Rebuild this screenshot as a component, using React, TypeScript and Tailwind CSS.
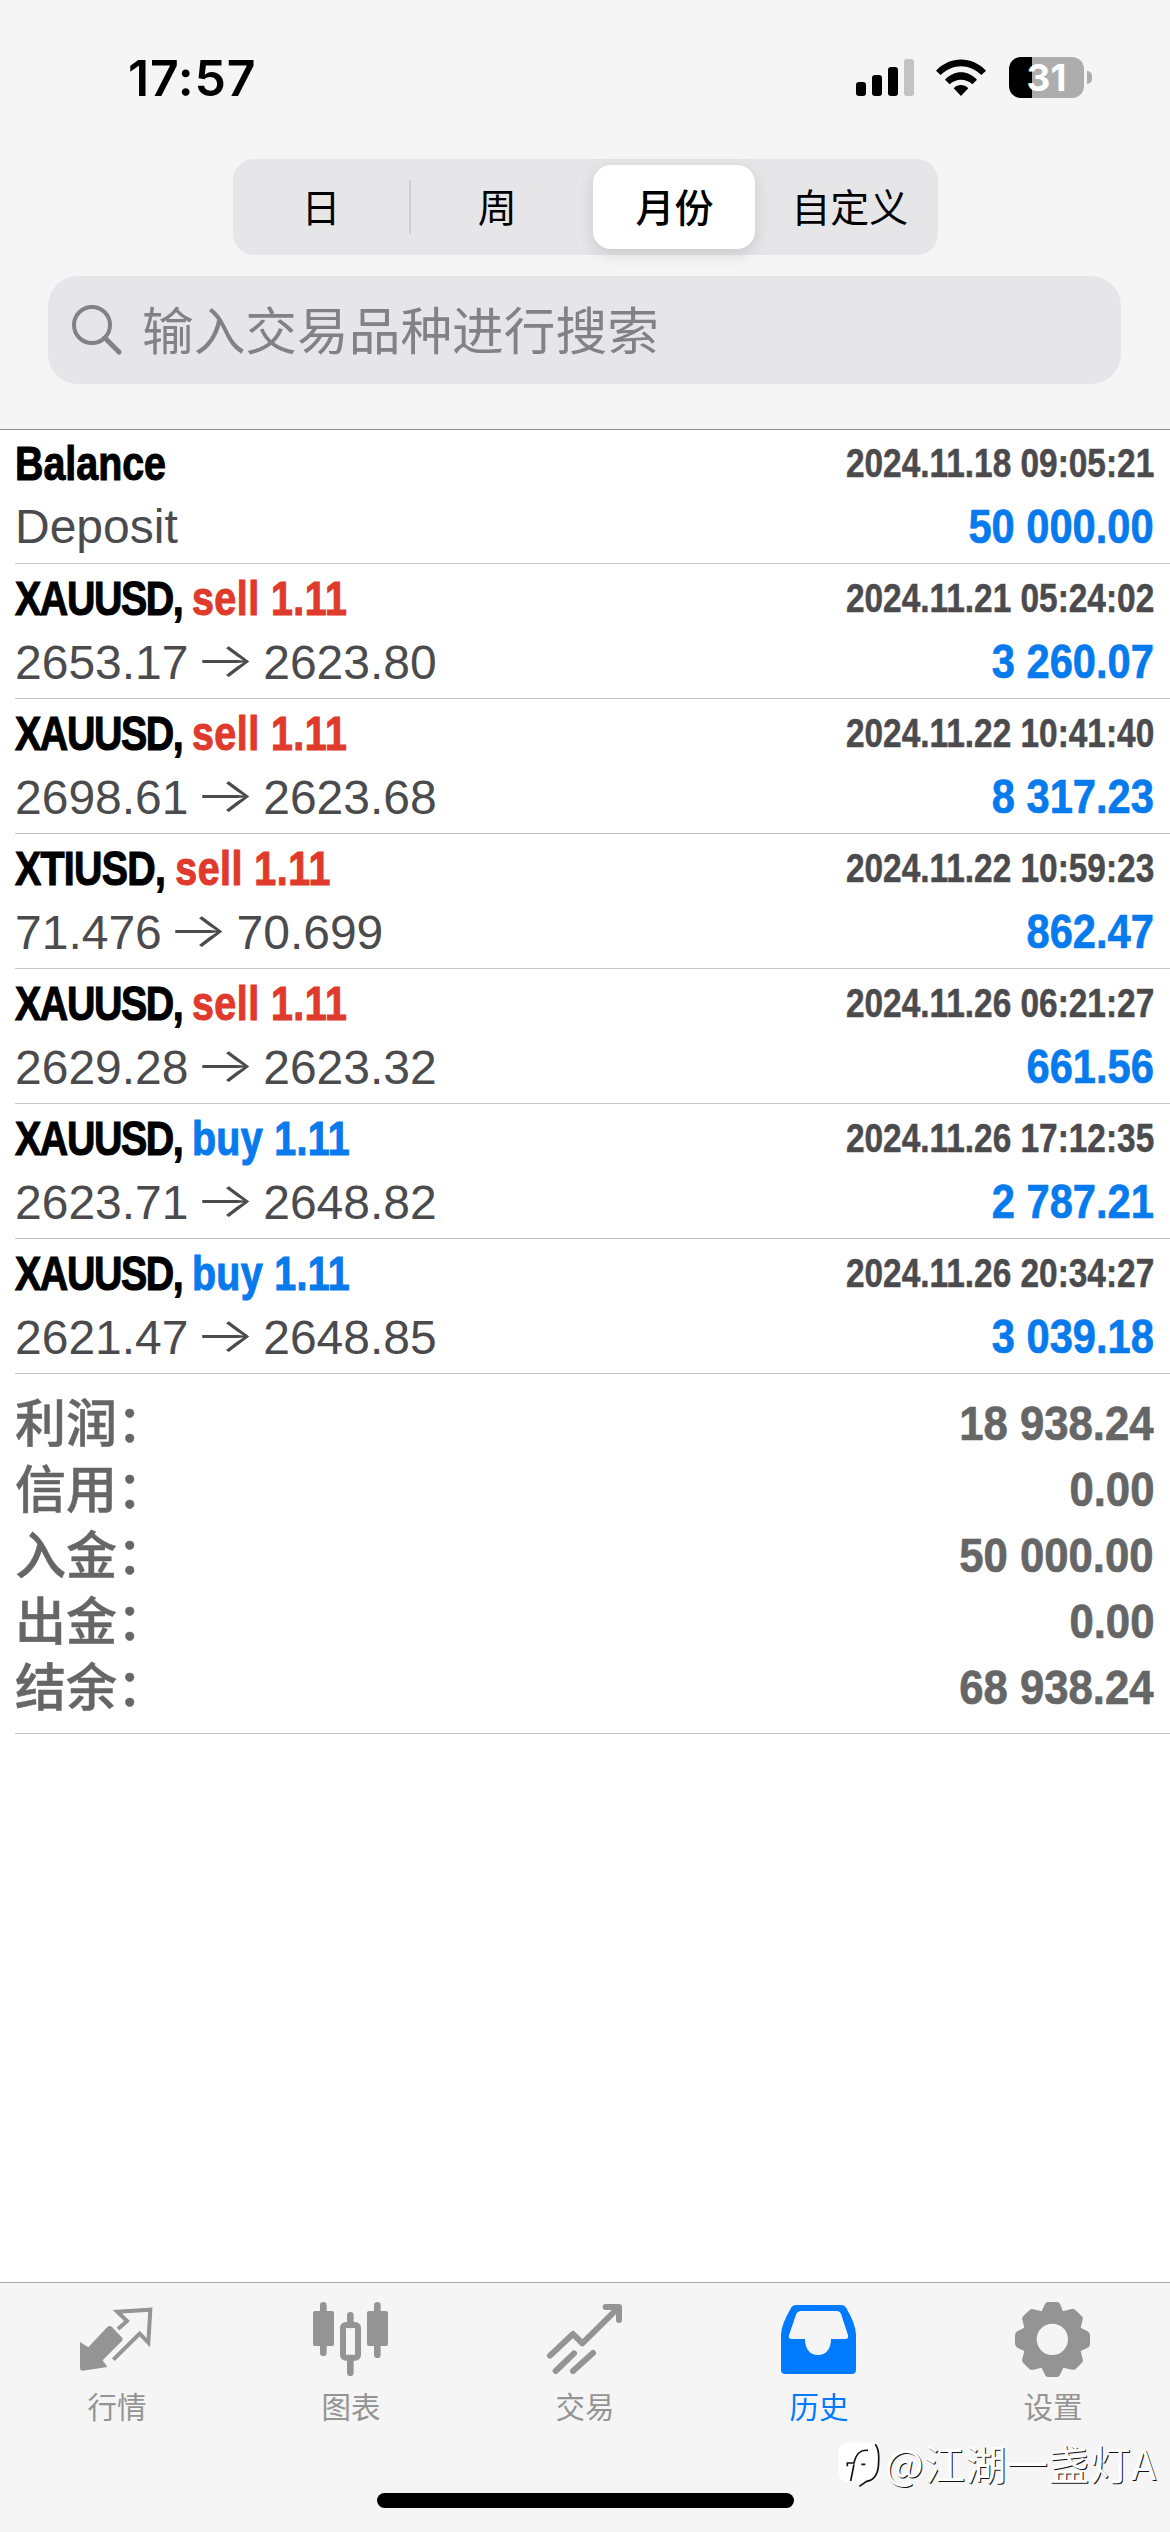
import type { ReactNode } from "react";

const deals = [
  { symbol: "XAUUSD", side: "sell", open: "2653.17", close: "2623.80", time: "2024.11.21 05:24:02", profit: "3 260.07" },
  { symbol: "XAUUSD", side: "sell", open: "2698.61", close: "2623.68", time: "2024.11.22 10:41:40", profit: "8 317.23" },
  { symbol: "XTIUSD", side: "sell", open: "71.476", close: "70.699", time: "2024.11.22 10:59:23", profit: "862.47" },
  { symbol: "XAUUSD", side: "sell", open: "2629.28", close: "2623.32", time: "2024.11.26 06:21:27", profit: "661.56" },
  { symbol: "XAUUSD", side: "buy", open: "2623.71", close: "2648.82", time: "2024.11.26 17:12:35", profit: "2 787.21" },
  { symbol: "XAUUSD", side: "buy", open: "2621.47", close: "2648.85", time: "2024.11.26 20:34:27", profit: "3 039.18" },
];

const totals = [
  { label: "利润：", value: "18 938.24" },
  { label: "信用：", value: "0.00" },
  { label: "入金：", value: "50 000.00" },
  { label: "出金：", value: "0.00" },
  { label: "结余：", value: "68 938.24" },
];

function StatusBar() {
  return (
    <div className="flex h-[159px] items-start justify-between pl-[128px] pr-[78px]">
      <span className="mt-[48px] font-['Inter',sans-serif] text-[50px] leading-[60px] font-semibold tracking-[0.8px] text-black">17:57</span>
      <div className="mt-[57px] flex items-start">
        <svg className="mt-[2px] h-[38px] w-[58px]" viewBox="0 0 58 38">
          <rect x="0" y="23" width="10" height="14" rx="3" />
          <rect x="16" y="16" width="10" height="21" rx="3" />
          <rect x="32" y="8" width="10" height="29" rx="3" />
          <rect x="48" y="0" width="10" height="37" rx="3" fill="#c3c3c3" />
        </svg>
        <svg className="mt-[2px] ml-[22px] h-[38px] w-[50px]" viewBox="0 0 150 114">
          <path d="M0 35C42-10 108-10 150 35L136 48C100 13 50 13 14 48Z" />
          <path d="M27 62C54 32 96 32 123 62L109 76C90 58 60 58 41 76Z" />
          <path d="M53 88C66 75 84 75 97 88L75 111Z" />
        </svg>
        <div className="ml-[23px] flex h-[41px] w-[75px] items-center justify-center rounded-[12px] bg-[linear-gradient(90deg,#000_0_23px,#adadad_23px)]">
          <span className="font-['Inter',sans-serif] text-[37px] leading-[41px] font-bold text-white">31</span>
        </div>
        <div className="mt-[14px] ml-[3px] h-[13px] w-[5px] rounded-r-full bg-[#adadad]" />
      </div>
    </div>
  );
}

function PeriodTabs() {
  return (
    <div className="mr-[232px] ml-[233px] flex h-[96px] w-[705px] items-center rounded-[21px] bg-[#e6e6e8] text-[39px] text-black">
      <span className="flex-1 pb-[4px] text-center">日</span>
      <div className="-mr-[2px] h-[54px] w-[2px] bg-[#cfcfd2]" />
      <span className="flex-1 pb-[4px] text-center">周</span>
      <div className="flex flex-1 justify-center">
        <span className="flex h-[84px] w-[162px] items-center justify-center rounded-[18px] bg-white pb-[4px] pl-[2px] font-medium shadow-[0_5px_16px_rgba(0,0,0,0.13)]">月份</span>
      </div>
      <span className="flex-1 pb-[4px] text-center">自定义</span>
    </div>
  );
}

function SearchBox() {
  return (
    <div className="mr-[49px] ml-[48px] mt-[21px] flex h-[108px] items-center rounded-[30px] bg-[#e6e6e8] pl-[24px] text-[#828285]">
      <svg className="h-[50px] w-[50px]" viewBox="0 0 50 50" fill="none" stroke="currentColor" strokeWidth="4">
        <circle cx="20" cy="20" r="18" />
        <path d="M33 33L47 47" strokeWidth="5" strokeLinecap="round" />
      </svg>
      <span className="ml-[20px] pb-[4px] text-[51.7px] leading-[60px]">输入交易品种进行搜索</span>
    </div>
  );
}

type RowProps = { title: ReactNode; time: string; detail: ReactNode; amount: string };

function Row({ title, time, detail, amount }: RowProps) {
  return (
    <div className="ml-[15px] h-[135px] border-b border-[#c6c6c9] pr-[16px] font-['Liberation_Sans',sans-serif]">
      <div className="flex h-[66px] items-end justify-between font-bold">
        <span className="origin-left scale-x-[0.82] text-[48px] leading-[63px] whitespace-pre text-black [-webkit-text-stroke:1.1px]">{title}</span>
        <span className="origin-right scale-x-[0.835] text-[40px] leading-[64px] text-[#4b4b4d] [-webkit-text-stroke:0.5px]">{time}</span>
      </div>
      <div className="flex h-[64px] items-center justify-between">
        <span className="text-[48px] leading-[60px] text-[#4b4b4d]">{detail}</span>
        <span className="origin-right scale-x-[0.867] text-[48px] leading-[60px] font-bold text-[#077aed] [-webkit-text-stroke:0.7px]">{amount}</span>
      </div>
    </div>
  );
}

function Tab({ label, box, active, children }: { label: string; box: string; active?: boolean; children: ReactNode }) {
  return (
    <div className={`flex flex-1 flex-col items-center ${active ? "text-[#007aff]" : "text-[#949494]"}`}>
      <svg className="mt-[17px] h-[80px] w-[80px]" viewBox={box} fill="currentColor">
        {children}
      </svg>
      <span className="mt-[7px] text-[29.5px] leading-[36px]">{label}</span>
    </div>
  );
}

function TabBar() {
  return (
    <div className="mt-auto flex h-[250px] flex-col border-t border-[#a9a9ab] bg-[#f5f5f5]">
      <div className="flex">
        <Tab label="行情" box="81 90 240 240">
          <path d="M90 216L115 232L172 171Q179 165 186 171L215 202Q221 208 215 214L158 271L172 291L98 302Q90 303 90 295Z" />
          <path d="M204 177L231 153L202 125L301 119L295 218L269 191L190 269" fill="none" stroke="currentColor" strokeWidth="12" />
        </Tab>
        <Tab label="图表" box="783 90 240 240">
          <path d="M820 106V248M982 106V254M901 136V165M901 265V308" stroke="currentColor" strokeWidth="20" strokeLinecap="round" />
          <rect x="789" y="123" width="63" height="105" rx="6" />
          <rect x="951" y="123" width="63" height="105" rx="6" />
          <rect x="879" y="165" width="45" height="98" rx="8" fill="none" stroke="currentColor" strokeWidth="18" />
        </Tab>
        <Tab label="交易" box="75 90 240 240">
          <g fill="none" stroke="currentColor" strokeWidth="18" strokeLinecap="round" strokeLinejoin="round">
            <path d="M90 257L159 192L187 220L296 112M257 111H297V150" />
            <path d="M107 303L162 250M159 303L219 249" />
          </g>
        </Tab>
        <Tab label="历史" box="777 90 240 240" active>
          <path
            fillRule="evenodd"
            d="M828 105H964Q974 105 979 114Q1008 165 1008 194V299Q1008 312 995 312H796Q783 312 783 299V194Q783 165 813 114Q818 105 828 105ZM842 123Q833 123 829 131L807 196Q804 207 815 207H855C855 238 870 255 894 255S933 238 933 207H976Q987 207 984 196L963 131Q960 123 951 123Z"
          />
        </Tab>
        <Tab label="设置" box="99 90 240 240">
          <path
            fillRule="evenodd"
            d="M203 96H232Q238 96 241 104L249 124L274 117Q281 115 286 120L305 138Q310 143 308 149L302 173L320 182Q330 187 330 195V222Q330 230 320 235L302 243L308 267Q310 275 305 279L288 296Q283 301 276 299L250 293L241 313Q238 321 232 321H203Q197 321 194 313L185 293L160 299Q153 301 147 296L130 279Q125 274 127 267L133 243L115 235Q105 230 105 222V195Q105 187 115 182L133 173L127 149Q125 143 130 138L149 120Q153 116 160 118L185 124L194 104Q197 96 203 96ZM217 161A47 47 0 1 0 217 255A47 47 0 1 0 217 161Z"
          />
        </Tab>
      </div>
      <div className="mx-auto mt-[70px] h-[15px] w-[417px] rounded-full bg-black" />
    </div>
  );
}

function Watermark() {
  return (
    <div className="absolute top-[2436px] left-[838px] flex items-center text-[40.8px] leading-[54px] whitespace-nowrap text-white">
      <svg className="h-[48px] w-[44px]" viewBox="0 0 132 144">
        <rect x="2" y="10" width="118" height="120" rx="28" fill="#fff" />
        <path d="M38 126L48 76M28 82V72H48C54 44 66 32 90 34M70 76H82" fill="none" stroke="#111" strokeWidth="5" />
        <path d="M112 16Q124 32 122 66Q122 122 86 127L64 142" fill="none" stroke="#111" strokeWidth="5" />
      </svg>
      <span className="ml-[3px] tracking-[0.6px] [text-shadow:1px_1px_0_#111]">@江湖一盏灯A</span>
    </div>
  );
}

export default function App() {
  return (
    <div className="relative flex h-[2532px] w-[1170px] flex-col overflow-hidden bg-white font-['Noto_Sans_CJK_SC',sans-serif]">
      <header className="h-[430px] border-b border-[#8c8c8e] bg-[#f5f5f5]">
        <StatusBar />
        <PeriodTabs />
        <SearchBox />
      </header>
      <main>
        <div className="-mt-px">
          <Row title="Balance" time="2024.11.18 09:05:21" detail="Deposit" amount="50 000.00" />
        </div>
        {deals.map((deal) => (
          <Row
            key={deal.time}
            title={
              <>
                <span className={deal.symbol === "XTIUSD" ? "tracking-[-0.9px]" : "tracking-[-1.7px]"}>{deal.symbol}, </span>
                <span className={deal.side === "sell" ? "tracking-[0.6px] text-[#df3a2c]" : "tracking-[0.4px] text-[#077aed]"}>{deal.side} 1.11</span>
              </>
            }
            time={deal.time}
            detail={
              <>
                {deal.open} <span className="inline-block w-[48px] -translate-x-px -translate-y-[2px] scale-x-[1.34] text-center font-['Inter',sans-serif] font-light">→</span> {deal.close}
              </>
            }
            amount={deal.profit}
          />
        ))}
        <div className="ml-[15px] h-[360px] border-b border-[#c6c6c9] pt-[15px] pr-[16px] text-[#666]">
          {totals.map((item) => (
            <div key={item.label} className="flex h-[66px] items-center justify-between">
              <span className="pb-[4px] text-[51px] leading-[62px] font-medium [-webkit-text-stroke:0.5px]">{item.label}</span>
              <span className="origin-right scale-x-[0.91] pt-[4px] font-['Liberation_Sans',sans-serif] text-[48px] leading-[62px] font-bold [-webkit-text-stroke:0.7px]">{item.value}</span>
            </div>
          ))}
        </div>
      </main>
      <TabBar />
      <Watermark />
    </div>
  );
}
